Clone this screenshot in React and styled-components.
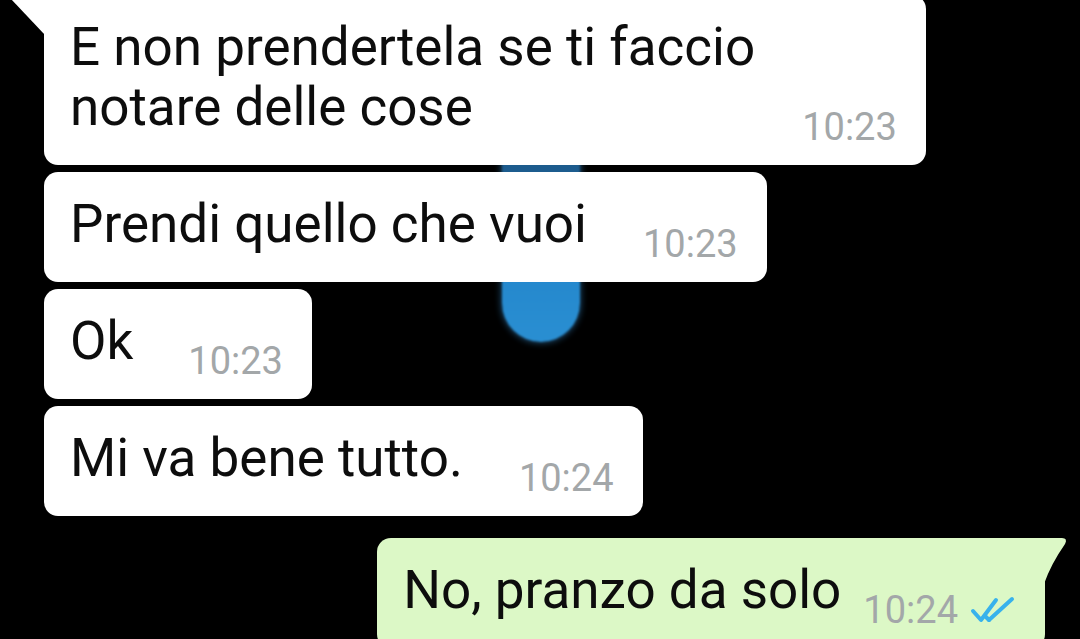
import React from "react";
import styled, { createGlobalStyle } from "styled-components";

const GlobalStyle = createGlobalStyle`
  html, body {
    margin: 0;
    padding: 0;
    background: #000;
    overflow: hidden;
  }
  * {
    box-sizing: border-box;
  }
`;

const Screen = styled.div`
  position: relative;
  width: 1080px;
  height: 639px;
  overflow: hidden;
  background: #000;
  font-family: Roboto, "Liberation Sans", sans-serif;
`;

// blue blob of the wallpaper peeking between the bubbles
const Wallpaper = styled.div`
  position: absolute;
  left: 502px;
  top: 60px;
  width: 78px;
  height: 282px;
  border-radius: 0 0 39px 39px;
  background: linear-gradient(180deg, #17476e 0%, #1d5f93 45%, #2386cc 70%, #2a8fd2 100%);
  box-shadow: 0 0 6px 1px rgba(60, 150, 220, 0.5);
  filter: blur(1.2px);
`;

const Thread = styled.div`
  position: relative;
  display: flex;
  flex-direction: column;
  gap: 7px;
  margin-top: -5px;
  padding: 0 12px 0 44px;
`;

const Row = styled.div`
  display: flex;
  justify-content: ${(props) => (props.isYours ? "flex-end" : "flex-start")};
  margin-top: ${(props) => (props.newGroup ? "15px" : "0")};
  padding-right: ${(props) => (props.isYours ? "23px" : "0")};
`;

const Bubble = styled.div`
  position: relative;
  display: flex;
  align-items: flex-end;
  gap: ${(props) => props.gap || 55}px;
  padding: 22px 29px 16px 26px;
  background: ${(props) => (props.isYours ? "#dcf8c6" : "#ffffff")};
  border-radius: 14px;
  border-top-left-radius: ${(props) => (props.tail && !props.isYours ? "0" : "14px")};
  border-top-right-radius: ${(props) => (props.tail && props.isYours ? "0" : "14px")};
`;

const Text = styled.div`
  font-size: 53px;
  line-height: 60px;
  color: #0d0d0d;
  margin-bottom: 12px;
  white-space: nowrap;
`;

const Meta = styled.div`
  display: flex;
  align-items: center;
  gap: 12px;
  font-size: 38px;
  line-height: 44px;
  color: #a3a7a9;
  white-space: nowrap;
`;

const TailLeft = styled.svg`
  position: absolute;
  left: -36px;
  top: 0;
`;

const TailRight = styled.svg`
  position: absolute;
  right: -23px;
  top: 0;
`;

const Ticks = () => (
  <svg width="46" height="28" viewBox="0 0 46 28">
    <g fill="none" stroke="#38b2ec" strokeWidth="4" strokeLinecap="round" strokeLinejoin="round">
      <path d="M3 15 L11 24 L26 4" />
      <path d="M19 24 L42 3" />
      <path d="M19 24 L15 20" />
    </g>
  </svg>
);

const messages = [
  { id: 1, lines: ["E non prendertela se ti faccio", "notare delle cose"], time: "10:23", tail: true, gap: 47 },
  { id: 2, lines: ["Prendi quello che vuoi"], time: "10:23", gap: 56 },
  { id: 3, lines: ["Ok"], time: "10:23", gap: 55 },
  { id: 4, lines: ["Mi va bene tutto."], time: "10:24", gap: 56 },
  { id: 5, lines: ["No, pranzo da solo"], time: "10:24", tail: true, isYours: true, gap: 22, newGroup: true },
];

export default function App() {
  return (
    <Screen>
      <GlobalStyle />
      <Wallpaper />
      <Thread>
        {messages.map((msg) => (
          <Row key={msg.id} isYours={msg.isYours} newGroup={msg.newGroup}>
            <Bubble isYours={msg.isYours} tail={msg.tail} gap={msg.gap}>
              {msg.tail && !msg.isYours && (
                <TailLeft width="38" height="40" viewBox="0 0 38 40">
                  <path d="M38 0 L4 0 Q0 0 3 4 L37 40 Z" fill="#ffffff" />
                </TailLeft>
              )}
              {msg.tail && msg.isYours && (
                <TailRight width="25" height="46" viewBox="0 0 25 46">
                  <path d="M0 0 L19 0 Q25 0 22 6 Q8 26 1 46 L0 46 Z" fill="#dcf8c6" />
                </TailRight>
              )}
              <Text>
                {msg.lines.map((line, i) => (
                  <div key={i}>{line}</div>
                ))}
              </Text>
              <Meta>
                {msg.time}
                {msg.isYours && <Ticks />}
              </Meta>
            </Bubble>
          </Row>
        ))}
      </Thread>
    </Screen>
  );
}
